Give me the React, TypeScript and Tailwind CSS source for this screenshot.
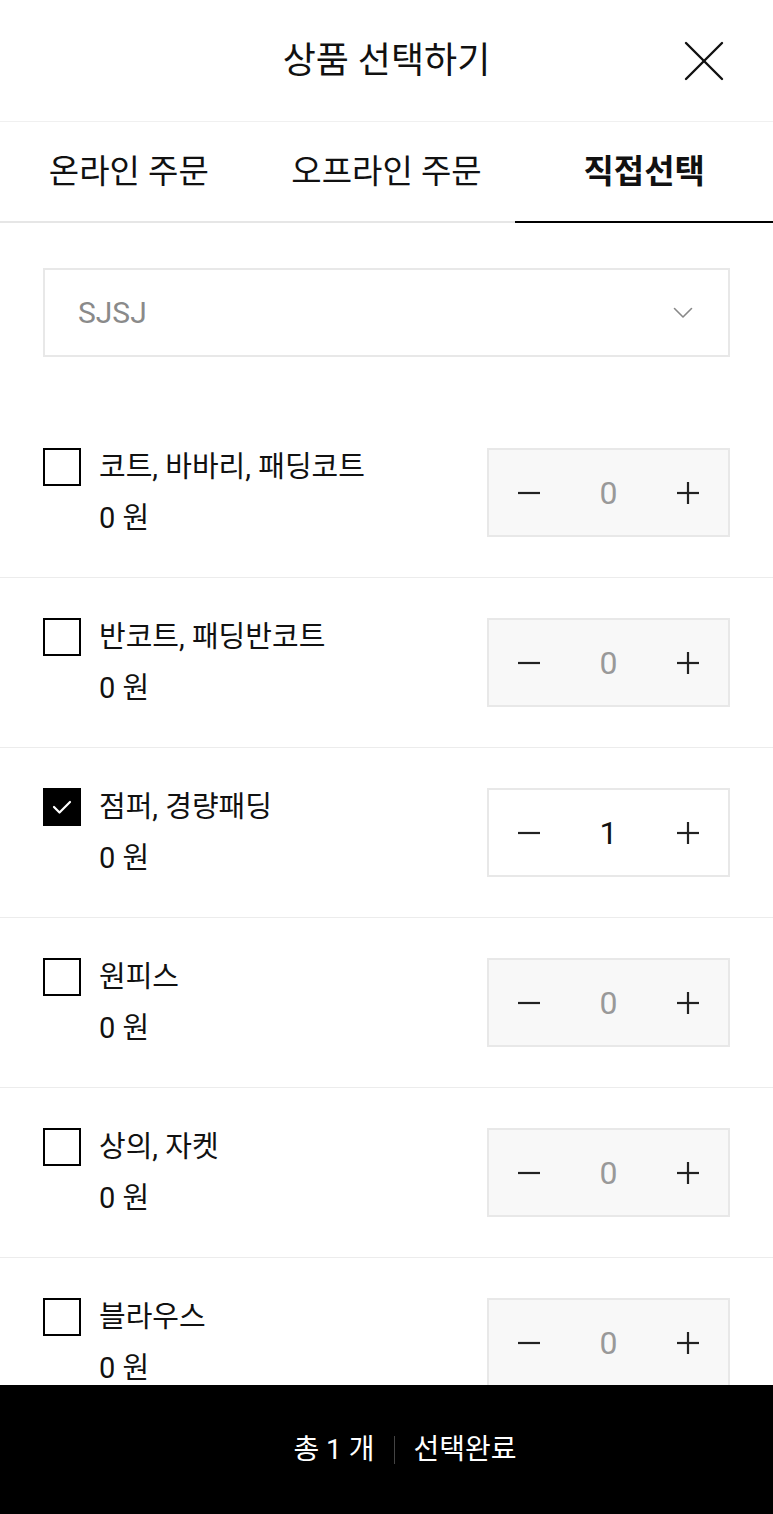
import { useState } from 'react';

const ITEMS = [
    { name: '코트, 바바리, 패딩코트', price: 0, qty: 0 },
    { name: '반코트, 패딩반코트', price: 0, qty: 0 },
    { name: '점퍼, 경량패딩', price: 0, qty: 1 },
    { name: '원피스', price: 0, qty: 0 },
    { name: '상의, 자켓', price: 0, qty: 0 },
    { name: '블라우스', price: 0, qty: 0 },
];

const TABS = ['온라인 주문', '오프라인 주문', '직접선택'];

function CloseIcon() {
    return (
        <svg width="40" height="40" viewBox="0 0 40 40" fill="none" stroke="#111" strokeWidth="2.4" strokeLinecap="round">
            <path d="M2 2 L38 38" />
            <path d="M38 2 L2 38" />
        </svg>
    );
}

function Chevron() {
    return (
        <svg width="20" height="12" viewBox="0 0 20 12" fill="none" stroke="#888" strokeWidth="1.6" strokeLinecap="round" strokeLinejoin="round">
            <path d="M1.5 1.5 L10 10 L18.5 1.5" />
        </svg>
    );
}

function Minus() {
    return (
        <svg width="24" height="24" viewBox="0 0 24 24" fill="none" stroke="#222" strokeWidth="2.2">
            <path d="M1 12 H23" />
        </svg>
    );
}

function Plus() {
    return (
        <svg width="24" height="24" viewBox="0 0 24 24" fill="none" stroke="#222" strokeWidth="2.2">
            <path d="M1 12 H23" />
            <path d="M12 1 V23" />
        </svg>
    );
}

function Checkbox({ checked }: { checked: boolean }) {
    if (checked) {
        return (
            <span className="flex h-[38px] w-[38px] shrink-0 items-center justify-center bg-black">
                <svg width="20" height="16" viewBox="0 0 20 16" fill="none" stroke="#fff" strokeWidth="2.2" strokeLinecap="round" strokeLinejoin="round">
                    <path d="M2 8 L7.5 13.5 L18 3" />
                </svg>
            </span>
        );
    }
    return <span className="h-[38px] w-[38px] shrink-0 border-2 border-black bg-white" />;
}

export default function App() {
    const [tab, setTab] = useState(2);
    const [items, setItems] = useState(ITEMS);

    const total = items.reduce((sum, it) => sum + it.qty, 0);

    const change = (i: number, d: number) => {
        setItems(prev => prev.map((it, idx) => (idx === i ? { ...it, qty: Math.max(0, it.qty + d) } : it)));
    };

    return (
        <div className="flex h-screen w-full flex-col overflow-hidden bg-white font-['Roboto','Noto_Sans_CJK_KR',sans-serif] text-[#111]">
            {/* Header */}
            <div className="relative flex h-[122px] shrink-0 items-center justify-center border-b border-[#f0f0f0]">
                <h1 className="text-[36px] leading-none">상품 선택하기</h1>
                <button className="absolute right-[49px] top-[41px]" aria-label="닫기">
                    <CloseIcon />
                </button>
            </div>

            {/* Tabs */}
            <div className="grid h-[101px] shrink-0 grid-cols-3 border-b-2 border-[#e6e6e6]">
                {TABS.map((t, i) => (
                    <button
                        key={t}
                        onClick={() => setTab(i)}
                        className={`-mb-[2px] flex items-center justify-center text-[33px] leading-none ${
                            tab === i ? 'border-b-2 border-black font-bold' : 'border-b-2 border-transparent'
                        }`}
                    >
                        {t}
                    </button>
                ))}
            </div>

            {/* Body */}
            <div className="flex-1 overflow-hidden">
                <div className="px-[43px] pt-[45px]">
                    <div className="flex h-[89px] items-center justify-between border-2 border-[#e8e8e8] pl-[33px] pr-[35px]">
                        <span className="text-[30px] leading-none text-[#8a8a8a]">SJSJ</span>
                        <Chevron />
                    </div>
                </div>

                <ul className="mt-[51px]">
                    {items.map((it, i) => (
                        <li key={it.name} className="flex justify-between border-b border-[#ececec] px-[43px] py-[40px]">
                            <div className="flex flex-col">
                                <label className="flex h-[38px] items-center gap-[18px]">
                                    <Checkbox checked={it.qty > 0} />
                                    <span className="text-[29px] leading-none">{it.name}</span>
                                </label>
                                <span className="ml-[56px] mt-[13px] flex h-[38px] items-center text-[29px] leading-none">
                                    {it.price} 원
                                </span>
                            </div>
                            <div
                                className={`grid h-[89px] w-[243px] grid-cols-3 items-center border-2 border-[#e8e8e8] text-[32px] leading-none ${
                                    it.qty > 0 ? 'bg-white' : 'bg-[#f8f8f8]'
                                }`}
                            >
                                <button onClick={() => change(i, -1)} className="flex justify-center">
                                    <Minus />
                                </button>
                                <span className={`text-center ${it.qty > 0 ? 'text-[#111]' : 'text-[#999]'}`}>{it.qty}</span>
                                <button onClick={() => change(i, 1)} className="flex justify-center">
                                    <Plus />
                                </button>
                            </div>
                        </li>
                    ))}
                </ul>
            </div>

            {/* Footer */}
            <button className="flex h-[129px] shrink-0 items-center justify-center bg-black pl-[37px] text-[28px] leading-none text-white">
                <span>총 {total} 개</span>
                <span className="mx-[19px] h-[28px] w-px bg-[#444]" />
                <span>선택완료</span>
            </button>
        </div>
    );
}
